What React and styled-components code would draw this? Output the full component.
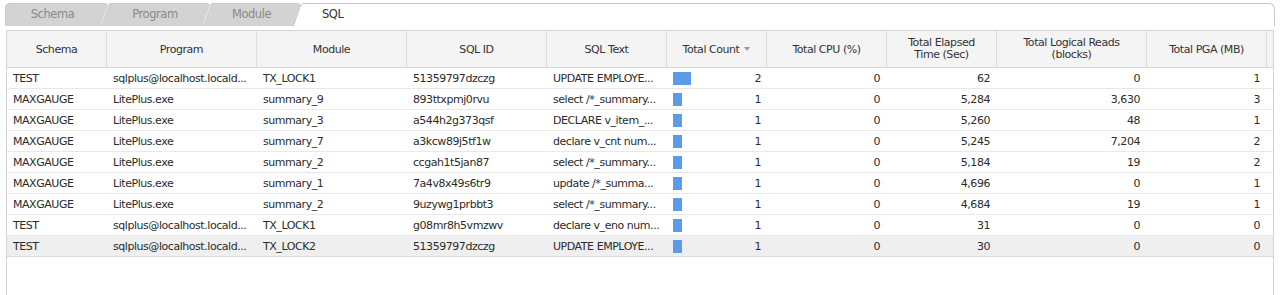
import React from "react";
import styled, { createGlobalStyle } from "styled-components";

const GlobalStyle = createGlobalStyle`
  html, body {
    margin: 0;
    padding: 0;
    background: #ffffff;
  }
  body {
    font-family: "DejaVu Sans", Verdana, sans-serif;
    font-size: 11px;
    letter-spacing: -0.45px;
    color: #333333;
  }
`;

const tabs = [
  { label: "Schema", width: 105 },
  { label: "Program", width: 112 },
  { label: "Module", width: 101 },
  { label: "SQL", active: true },
];

const columns = [
  { key: "schema", title: "Schema", width: 100 },
  { key: "program", title: "Program", width: 150 },
  { key: "module", title: "Module", width: 150 },
  { key: "sqlId", title: "SQL ID", width: 140 },
  { key: "sqlText", title: "SQL Text", width: 120 },
  { key: "count", title: "Total Count", width: 100, sorted: true },
  { key: "cpu", title: "Total CPU (%)", width: 120, num: true },
  { key: "elapsed", title: ["Total Elapsed", "Time (Sec)"], width: 110, num: true },
  { key: "reads", title: ["Total Logical Reads", "(blocks)"], width: 150, num: true },
  { key: "pga", title: "Total PGA (MB)", width: 120, num: true },
];

const rows = [
  ["TEST", "sqlplus@localhost.locald...", "TX_LOCK1", "51359797dzczg", "UPDATE EMPLOYE...", 2, "0", "62", "0", "1"],
  ["MAXGAUGE", "LitePlus.exe", "summary_9", "893ttxpmj0rvu", "select /*_summary...", 1, "0", "5,284", "3,630", "3"],
  ["MAXGAUGE", "LitePlus.exe", "summary_3", "a544h2g373qsf", "DECLARE v_item_...", 1, "0", "5,260", "48", "1"],
  ["MAXGAUGE", "LitePlus.exe", "summary_7", "a3kcw89j5tf1w", "declare v_cnt num...", 1, "0", "5,245", "7,204", "2"],
  ["MAXGAUGE", "LitePlus.exe", "summary_2", "ccgah1t5jan87", "select /*_summary...", 1, "0", "5,184", "19", "2"],
  ["MAXGAUGE", "LitePlus.exe", "summary_1", "7a4v8x49s6tr9", "update /*_summa...", 1, "0", "4,696", "0", "1"],
  ["MAXGAUGE", "LitePlus.exe", "summary_2", "9uzywg1prbbt3", "select /*_summary...", 1, "0", "4,684", "19", "1"],
  ["TEST", "sqlplus@localhost.locald...", "TX_LOCK1", "g08mr8h5vmzwv", "declare v_eno num...", 1, "0", "31", "0", "0"],
  ["TEST", "sqlplus@localhost.locald...", "TX_LOCK2", "51359797dzczg", "UPDATE EMPLOYE...", 1, "0", "30", "0", "0"],
];

const gridTemplate = columns.map((c) => `${c.width}px`).join(" ") + " 1fr";

export default function App() {
  return (
    <>
      <GlobalStyle />
      <Page>
        <TabBar>
          {tabs.map((t, i) => (
            <Tab key={t.label} $first={i === 0} $active={t.active} $width={t.width} $z={i + 1}>
              {t.label}
            </Tab>
          ))}
        </TabBar>
        <Panel>
          <Grid>
            <HeaderRow>
              {columns.map((c) => (
                <HeaderCell key={c.key}>
                  {Array.isArray(c.title) ? (
                    <TwoLine>
                      <span>{c.title[0]}</span>
                      <span>{c.title[1]}</span>
                    </TwoLine>
                  ) : (
                    c.title
                  )}
                  {c.sorted && <SortArrow />}
                </HeaderCell>
              ))}
              <HeaderCell $filler />
            </HeaderRow>
            {rows.map((r, ri) => (
              <Row key={ri} $selected={ri === rows.length - 1}>
                {r.map((v, ci) => {
                  const col = columns[ci];
                  if (col.key === "count") {
                    return (
                      <CountCell key={ci}>
                        <Bar style={{ width: v * 9 }} />
                        <span>{v}</span>
                      </CountCell>
                    );
                  }
                  return (
                    <Cell key={ci} $num={col.num}>
                      {v}
                    </Cell>
                  );
                })}
              </Row>
            ))}
          </Grid>
        </Panel>
      </Page>
    </>
  );
}

const Page = styled.div`
  height: 295px;
  display: flex;
  flex-direction: column;
  overflow: hidden;
  background: #fff;
`;

const TabBar = styled.div`
  display: flex;
  height: 23px;
  margin-top: 3px;
  padding: 0 5px;
`;

const Tab = styled.div`
  position: relative;
  z-index: ${(p) => p.$z};
  flex: ${(p) => (p.$active ? "1" : "none")};
  width: ${(p) => (p.$width ? `${p.$width}px` : "auto")};
  margin-left: ${(p) => (p.$first ? "0" : "-10px")};
  height: 23px;
  line-height: 23px;
  box-sizing: border-box;
  padding-left: ${(p) => (p.$active ? "29px" : p.$first ? "0" : "8px")};
  padding-right: ${(p) => (p.$active ? "0" : "10px")};
  text-align: ${(p) => (p.$active ? "left" : "center")};
  font-size: 11.5px;
  color: ${(p) => (p.$active ? "#333" : "#8a8a8a")};

  &::before {
    content: "";
    position: absolute;
    z-index: -1;
    left: 0;
    top: 0;
    bottom: 0;
    width: 16px;
    box-sizing: border-box;
    background: ${(p) => (p.$active ? "#fff" : "#d3d3d3")};
    border-top: 1px solid ${(p) => (p.$active ? "#c6c6c6" : "#cbcbcb")};
    border-left: 1px solid ${(p) => (p.$active ? "#c6c6c6" : p.$first ? "#cbcbcb" : "#ebebeb")};
    border-top-left-radius: 5px;
    transform-origin: bottom left;
    transform: ${(p) => (p.$first ? "none" : "skewX(-19deg)")};
  }

  &::after {
    content: "";
    position: absolute;
    z-index: -1;
    left: 9px;
    right: 0;
    top: 0;
    bottom: 0;
    box-sizing: border-box;
    background: ${(p) => (p.$active ? "#fff" : "#d3d3d3")};
    border-top: 1px solid ${(p) => (p.$active ? "#c6c6c6" : "#cbcbcb")};
    border-right: ${(p) => (p.$active ? "1px solid #c6c6c6" : "none")};
    border-top-right-radius: 6px;
  }
`;

const Panel = styled.div`
  flex: 1;
  display: flex;
  flex-direction: column;
  padding-top: 4px;
  min-height: 0;
`;

const Grid = styled.div`
  flex: 1;
  margin: 0 6px;
  border-left: 1px solid #d4d4d4;
  border-right: 1px solid #d4d4d4;
  border-top: 1px solid #d4d4d4;
`;

const HeaderRow = styled.div`
  display: grid;
  grid-template-columns: ${gridTemplate};
  height: 36px;
  background: #f4f4f4;
  border-bottom: 1px solid #d9d9d9;
`;

const HeaderCell = styled.div`
  display: flex;
  align-items: center;
  justify-content: center;
  box-sizing: border-box;
  border-right: ${(p) => (p.$filler ? "none" : "1px solid #dcdcdc")};
  color: #333;
  text-align: center;
  white-space: nowrap;
`;

const TwoLine = styled.div`
  display: flex;
  flex-direction: column;
  align-items: center;
  line-height: 12px;
`;

const SortArrow = styled.span`
  display: inline-block;
  margin-left: 5px;
  width: 0;
  height: 0;
  border-left: 3.5px solid transparent;
  border-right: 3.5px solid transparent;
  border-top: 4px solid #9a9a9a;
`;

const Row = styled.div`
  display: grid;
  grid-template-columns: ${columns.map((c) => `${c.width}px`).join(" ")};
  height: 21px;
  box-sizing: border-box;
  border-bottom: 1px solid ${(p) => (p.$selected ? "#d9d9d9" : "#e8e8e8")};
  background: ${(p) => (p.$selected ? "#efefef" : "transparent")};
`;

const Cell = styled.div`
  display: flex;
  align-items: center;
  justify-content: ${(p) => (p.$num ? "flex-end" : "flex-start")};
  padding: ${(p) => (p.$num ? "0 7px 0 0" : "0 0 0 6px")};
  color: #2b2b2b;
  white-space: nowrap;
  overflow: hidden;
`;

const CountCell = styled.div`
  display: flex;
  align-items: center;
  justify-content: space-between;
  padding: 0 6px 0 6px;
  color: #2b2b2b;
`;

const Bar = styled.div`
  height: 13px;
  background: #5b9be7;
`;
